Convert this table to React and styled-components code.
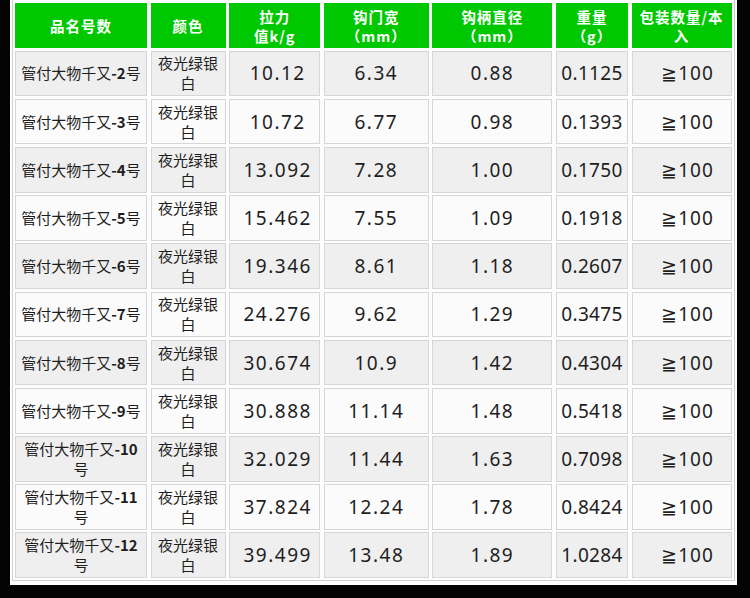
import React from "react";
import styled, { createGlobalStyle } from "styled-components";

const Global = createGlobalStyle`
  html, body { margin: 0; padding: 0; background: #000; }
  body { font-family: "Noto Sans", "Noto Sans CJK SC", sans-serif; }
`;

const Page = styled.div`
  width: 750px;
  height: 598px;
  background: #030303;
  overflow: hidden;
`;

const Sheet = styled.div`
  margin-left: 10px;
  width: 727px;
  background: #fdfdfd;
  padding: 0 2px 4px 2px;
  box-sizing: border-box;
`;

const Table = styled.div`
  display: grid;
  grid-template-columns: 132px 75px 91px 105px 120px 72px 100px;
  grid-template-rows: 45px repeat(11, 45.6px);
  column-gap: 3.6px;
  row-gap: 2.6px;
  padding: 3px 1.5px 2px 2px;
  border: 1px solid #cfcfcf;
  border-top: none;
  background: #fdfdfd;
`;

const Head = styled.div`
  background: #00c800;
  color: #fff;
  font-family: "Noto Sans CJK SC", "Noto Sans", sans-serif;
  font-weight: 700;
  font-size: 14.5px;
  line-height: 19px;
  letter-spacing: 1px;
  display: flex;
  align-items: center;
  justify-content: center;
  text-align: center;
  padding: 0 2px;
  box-sizing: border-box;
`;

const Cell = styled.div`
  background: ${(p) => (p.$alt ? "#fbfbfb" : "#efefef")};
  border: 1px solid #d6d6d6;
  box-sizing: border-box;
  display: flex;
  align-items: center;
  justify-content: center;
  text-align: center;
  color: #1e1e1e;
`;

const NameCell = styled(Cell)`
  font-family: "Noto Sans CJK SC", sans-serif;
  font-size: 15px;
  line-height: 20px;
  padding: 0 2px;
  b { font-weight: 700; }
`;

const ColorCell = styled(Cell)`
  font-family: "Noto Sans CJK SC", sans-serif;
  font-size: 15px;
  line-height: 20px;
  padding: 0 5px;
`;

const NumCell = styled(Cell)`
  font-family: "Noto Sans", sans-serif;
  font-size: 19px;
  letter-spacing: ${(p) => p.$ls ?? 1.5}px;
  padding-left: ${(p) => p.$pl ?? 0}px;
`;

const headers = [
  ["品名号数"],
  ["颜色"],
  ["拉力", "值k/g"],
  ["钩门宽", "（mm）"],
  ["钩柄直径", "（mm）"],
  ["重量", "（g）"],
  ["包装数量/本入"],
];

const rows = [
  ["2", "10.12", "6.34", "0.88", "0.1125"],
  ["3", "10.72", "6.77", "0.98", "0.1393"],
  ["4", "13.092", "7.28", "1.00", "0.1750"],
  ["5", "15.462", "7.55", "1.09", "0.1918"],
  ["6", "19.346", "8.61", "1.18", "0.2607"],
  ["7", "24.276", "9.62", "1.29", "0.3475"],
  ["8", "30.674", "10.9", "1.42", "0.4304"],
  ["9", "30.888", "11.14", "1.48", "0.5418"],
  ["10", "32.029", "11.44", "1.63", "0.7098"],
  ["11", "37.824", "12.24", "1.78", "0.8424"],
  ["12", "39.499", "13.48", "1.89", "1.0284"],
];

export default function App() {
  return (
    <Page>
      <Global />
      <Sheet>
        <Table>
          {headers.map((h, i) => (
            <Head key={"h" + i}>
              <span>
                {h.map((line, j) => (
                  <React.Fragment key={j}>
                    {j > 0 && <br />}
                    {line}
                  </React.Fragment>
                ))}
              </span>
            </Head>
          ))}
          {rows.map((r, i) => {
            const alt = i % 2 === 1;
            return (
              <React.Fragment key={"r" + i}>
                <NameCell $alt={alt}>
                  <span>
                    管付大物千又<b>-{r[0]}</b>号
                  </span>
                </NameCell>
                <ColorCell $alt={alt}>夜光绿银白</ColorCell>
                <NumCell $alt={alt} $pl={6}>{r[1]}</NumCell>
                <NumCell $alt={alt}>{r[2]}</NumCell>
                <NumCell $alt={alt}>{r[3]}</NumCell>
                <NumCell $alt={alt} $ls={0.3}>{r[4]}</NumCell>
                <NumCell $alt={alt} $ls={1} $pl={12}>≧100</NumCell>
              </React.Fragment>
            );
          })}
        </Table>
      </Sheet>
    </Page>
  );
}
